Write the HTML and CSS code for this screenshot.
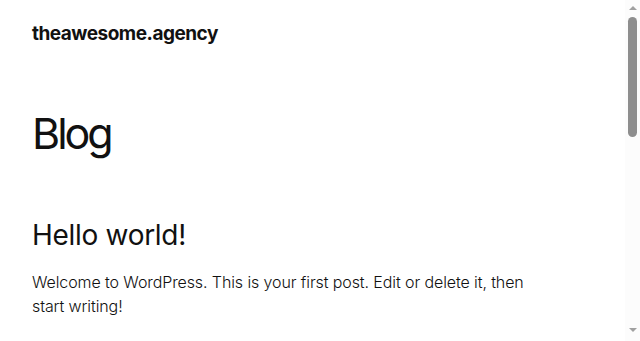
FILE: index.html
```html
<!DOCTYPE html>
<html lang="en">
<head>
<meta charset="utf-8">
<title>Blog – theawesome.agency</title>
<link rel="stylesheet" href="styles.css">
</head>
<body>
<div class="page">
  <header class="site-header">
    <p class="site-title">theawesome.agency</p>
  </header>
  <main class="site-main">
    <h1 class="page-title">Blog</h1>
    <article class="post">
      <h2 class="post-title">Hello world!</h2>
      <p class="post-excerpt">Welcome to WordPress. This is your first post. Edit or delete it, then start writing!</p>
    </article>
  </main>
</div>
<div class="scrollbar" aria-hidden="true">
  <span class="sb-arrow sb-up"></span>
  <span class="sb-thumb"></span>
  <span class="sb-arrow sb-down"></span>
</div>
</body>
</html>
```
FILE: styles.css
```css
html, body {
  margin: 0;
  padding: 0;
  background: #ffffff;
  color: #111111;
  font-family: Inter, "Noto Sans", sans-serif;
}
.page {
  padding-right: 15px;
}
.site-header {
  padding: 21px 32px 0;
}
.site-title {
  margin: 0;
  font-size: 19px;
  font-weight: 700;
  letter-spacing: -0.5px;
  line-height: 26px;
}
.site-main {
  padding: 0 32px 560px;
}
.page-title {
  margin: 61px 0 0;
  font-size: 43px;
  font-weight: 400;
  line-height: 50px;
  letter-spacing: -3px;
}
.post {
  margin-top: 59px;
}
.post-title {
  margin: 0;
  font-size: 28px;
  font-weight: 400;
  line-height: 36px;
  letter-spacing: -0.3px;
}
.post-excerpt {
  margin: 17px 0 0;
  max-width: 510px;
  font-size: 16px;
  font-weight: 300;
  line-height: 24px;
  letter-spacing: -0.1px;
}
.scrollbar {
  position: fixed;
  top: 0;
  right: 0;
  width: 15px;
  height: 100%;
  background: #fcfcfc;
  display: flex;
  flex-direction: column;
  align-items: center;
}
.sb-arrow {
  width: 0;
  height: 0;
  border-left: 4px solid transparent;
  border-right: 4px solid transparent;
}
.sb-up {
  margin-top: 6px;
  border-bottom: 4px solid #a0a0a0;
}
.sb-thumb {
  margin-top: 7px;
  width: 9px;
  height: 120px;
  border-radius: 5px;
  background: #8e8e8e;
}
.sb-down {
  margin-top: auto;
  margin-bottom: 9px;
  border-top: 4px solid #a0a0a0;
}
```
